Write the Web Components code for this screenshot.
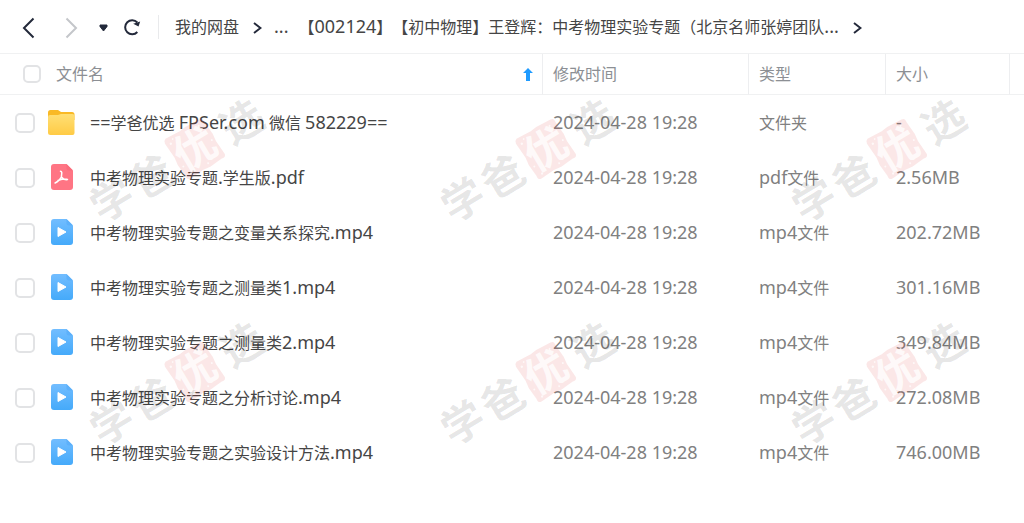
<!DOCTYPE html>
<html lang="zh-CN">
<head>
<meta charset="utf-8">
<title>我的网盘</title>
<style>
body {
    margin: 0;
    background: #fff;
    color: #454545;
    font: 16px/24px "Noto Sans", "Noto Sans CJK SC", sans-serif;
    text-spacing-trim: space-all;
}
</style>
</head>
<body>
<disk-page>
  <nav-bar slot="top">
    <path-crumbs>
      <path-crumb>我的网盘</path-crumb>
      <path-crumb plain>...</path-crumb>
      <path-crumb>【002124】【初中物理】王登辉：中考物理实验专题（北京名师张婷团队...</path-crumb>
    </path-crumbs>
  </nav-bar>
  <file-list></file-list>
</disk-page>

<script>
const files = [
  { kind: 'folder', name: '==学爸优选 FPSer.com 微信 582229==', type: '文件夹', size: '-' },
  { kind: 'pdf', name: '中考物理实验专题.学生版.pdf', type: 'pdf文件', size: '2.56MB' },
  { kind: 'video', name: '中考物理实验专题之变量关系探究.mp4', type: 'mp4文件', size: '202.72MB' },
  { kind: 'video', name: '中考物理实验专题之测量类1.mp4', type: 'mp4文件', size: '301.16MB' },
  { kind: 'video', name: '中考物理实验专题之测量类2.mp4', type: 'mp4文件', size: '349.84MB' },
  { kind: 'video', name: '中考物理实验专题之分析讨论.mp4', type: 'mp4文件', size: '272.08MB' },
  { kind: 'video', name: '中考物理实验专题之实验设计方法.mp4', type: 'mp4文件', size: '746.00MB' }
]
const modified = '2024-04-28 19:28'

// latin runs are set a little larger than the han characters
const latin = (text) => text.replace(/[\x21-\x7e]+( [\x21-\x7e]+)*/g, '<span class="latin">$&</span>')

class BaseElement extends HTMLElement {
  constructor() {
    super()
    this._shadowRoot = this.attachShadow({ mode: 'open' })
  }

  connectedCallback() {
    this._shadowRoot.innerHTML = this.render()
  }
}

class DiskPage extends BaseElement {
  render() {
    return `
<style>
:host {
    display: block;
    position: relative;
    min-height: 100vh;
    overflow: hidden;
}

.marks {
    position: absolute;
    inset: 0;
    padding: 97px 0 0 90px;
    display: grid;
    grid-template-columns: repeat(3, 180px);
    grid-auto-rows: 126px;
    gap: 97px 171px;
    align-content: start;
    pointer-events: none;
}
</style>
<slot name="top"></slot>
<slot></slot>
<div class="marks" aria-hidden="true">${'<water-mark></water-mark>'.repeat(6)}</div>`
  }
}

class WaterMark extends BaseElement {
  render() {
    return `
<style>
:host {
    display: block;
}

svg {
    display: block;
    overflow: visible;
}

text {
    font: 700 42px "Noto Sans CJK SC", sans-serif;
    text-anchor: middle;
    fill: #000;
    fill-opacity: 0.1;
}

.seal {
    fill: #d82020;
    fill-opacity: 0.11;
}

.seal-text {
    fill: #fff;
    fill-opacity: 0.8;
}
</style>
<svg width="180" height="126" viewBox="0 0 180 126">
  <text transform="translate(22 103) rotate(-31)" y="15">学</text>
  <text transform="translate(62 80) rotate(-31)" y="15">爸</text>
  <g transform="translate(105 52) rotate(-31)">
    <path class="seal" d="M-20-24L-4-23 3-24 19-23Q23-23 22-18L23-4 22 4 23 19Q23 23 18 22L4 23-4 22-19 23Q-23 23-22 18L-23 5-22-3-23-20Q-23-23-20-24Z"/>
    <text class="seal-text" y="15">优</text>
    <g fill="#fff" fill-opacity="0.7">
      <circle cx="-18" cy="-17" r="1.2"/><circle cx="-14" cy="-20" r="0.9"/><circle cx="-19" cy="9" r="1"/>
      <circle cx="-16" cy="19" r="1.1"/><circle cx="15" cy="-18" r="1"/><circle cx="19" cy="1" r="1"/><circle cx="4" cy="19" r="1"/>
    </g>
  </g>
  <text transform="translate(152 25) rotate(-31)" y="15">选</text>
</svg>`
  }
}

class NavBar extends BaseElement {
  render() {
    return `
<style>
:host {
    display: flex;
    align-items: center;
    height: 53px;
    padding-left: 16px;
    border-bottom: 1px solid #f0f1f2;
}

button {
    display: flex;
    align-items: center;
    justify-content: center;
    width: 24px;
    height: 24px;
    margin: 0;
    padding: 0;
    border: 0;
    background: none;
}

.history {
    display: flex;
    gap: 20px;
    margin-right: 8px;
}

.tools {
    display: flex;
    gap: 4px;
    margin-right: 14px;
}

.line {
    width: 1px;
    height: 24px;
    margin-right: 16px;
    background: #e9eaec;
}

svg {
    fill: none;
    stroke: #23293a;
    stroke-width: 2;
}
</style>
<div class="history">
  <button aria-label="后退"><svg width="24" height="24"><path d="M17.500 3.500L8 13l9.500 9.500"/></svg></button>
  <button aria-label="前进" disabled><svg width="24" height="24"><path d="M6.500 3.500L16 13l-9.500 9.500" stroke="#c4c6ca"/></svg></button>
</div>
<div class="tools">
  <button aria-label="历史"><svg width="24" height="24"><path d="M8 10h7v1.500L11.500 16 8 11.500z" fill="#23293a" stroke-width="1"/></svg></button>
  <button aria-label="刷新"><svg width="24" height="24"><path d="M17.300 7.500A7 7 0 1 0 17.300 17"/><path d="M20.200 6.500l-1.700 5-5.300-2.800z" fill="#23293a" stroke="none"/></svg></button>
</div>
<div class="line"></div>
<slot></slot>`
  }
}

class PathCrumbs extends BaseElement {
  render() {
    return `
<style>
:host {
    display: flex;
    align-items: center;
    min-width: 0;
    height: 24px;
}
</style>
<slot></slot>`
  }
}

class PathCrumb extends BaseElement {
  render() {
    return `
<style>
:host {
    display: flex;
    align-items: center;
    white-space: nowrap;
}

a {
    color: inherit;
    text-decoration: none;
}

svg {
    margin: 2px 12px 0 14px;
    fill: none;
    stroke: #23293a;
    stroke-width: 2;
}

:host([plain]) {
    margin-right: 10px;
}

:host([plain]) svg {
    display: none;
}

.latin {
    font-size: 18px;
    line-height: 24px;
}
</style>
<a href="#">${latin(this.textContent)}</a>
<svg width="9" height="12"><path d="M1 1l6.500 5L1 11"/></svg>`
  }
}

class CheckBox extends BaseElement {
  render() {
    return `
<style>
:host {
    display: block;
    width: 20px;
    height: 20px;
}

:host([small]) {
    width: 18px;
    height: 18px;
}

input {
    appearance: none;
    display: block;
    box-sizing: border-box;
    width: 100%;
    height: 100%;
    margin: 0;
    border: 2px solid #e2e3e5;
    border-radius: 5px;
    background: #fff;
}
</style>
<input type="checkbox" aria-label="${this.getAttribute('label')}">`
  }
}

class FileIcon extends BaseElement {
  render() {
    const sheet = 'M6 0h12.500l6.500 6.500V23q0 3-3 3H6q-3 0-3-3V3q0-3 3-3z'
    const icons = {
      folder: `
  <defs><linearGradient id="g" x2="0" y2="1"><stop stop-color="#ffdf75"/><stop offset="1" stop-color="#ffcb45"/></linearGradient></defs>
  <path d="M2.500 1H10l3 2h11q2.500 0 2.500 2.500V11H0V3.500Q0 1 2.500 1z" fill="#f9b926"/>
  <path d="M2 6h8l3-1h11.500q2 0 2 2v17q0 2-2 2H2.500Q0 26 0 23.500V8q0-2 2-2z" fill="url(#g)"/>`,
      pdf: `
  <path d="${sheet}" fill="#ff7584"/>
  <path d="M18.500 0L25 6.500h-4.500q-2 0-2-2z" fill="#fa6c7c"/>
  <path d="M12.500 7.200c2.200 0 .9 3.300.9 5.800 1.700 2.600 3.500 2.800 6.100 2.600M13.400 13c-1.800 3.200-3.600 5-6.300 6M10 16.500c2.500-1.400 6-2 9-1.200" fill="none" stroke="#fff" stroke-width="1.500" stroke-linecap="round"/>`,
      video: `
  <defs><linearGradient id="g" x2="0" y2="1"><stop stop-color="#72bdff"/><stop offset="1" stop-color="#45aafa"/></linearGradient></defs>
  <path d="${sheet}" fill="url(#g)"/>
  <path d="M18.500 0L25 6.500h-4.500q-2 0-2-2z" fill="#5db0fa"/>
  <path d="M10 8.500l8 4.500-8 4.500z" fill="#fff" stroke="#fff" stroke-linejoin="round"/>`
    }
    return `
<style>
:host {
    display: block;
}

svg {
    display: block;
}
</style>
<svg width="27" height="27" viewBox="0 0 27 27">${icons[this.getAttribute('kind')]}</svg>`
  }
}

class FileList extends BaseElement {
  render() {
    const rows = files.map((file) => `
  <tr>
    <td>
      <div class="name">
        <check-box label="${file.name}"></check-box>
        <file-icon kind="${file.kind}"></file-icon>
        <span>${latin(file.name)}</span>
      </div>
    </td>
    <td>${latin(modified)}</td>
    <td>${latin(file.type)}</td>
    <td>${latin(file.size)}</td>
    <td></td>
  </tr>`).join('')

    return `
<style>
:host {
    display: block;
}

table {
    width: 100%;
    table-layout: fixed;
    border-collapse: separate;
    border-spacing: 0;
}

th, td {
    box-sizing: border-box;
    padding: 0 0 0 11px;
    text-align: left;
    font-weight: 400;
    white-space: nowrap;
}

th {
    height: 41px;
    padding-left: 10px;
    border-bottom: 1px solid #f0f1f2;
    color: #8c8f94;
}

th + th {
    border-left: 1px solid #edeef0;
}

td {
    height: 55px;
    color: #808080;
}

th:first-child {
    padding: 0 9px 0 23px;
}

td:first-child {
    padding-left: 15px;
    color: #454545;
}

th:last-child, td:last-child {
    padding: 0;
}

.time {
    width: 206px;
}

.type {
    width: 137px;
}

.size {
    width: 124px;
}

.more {
    width: 15px;
}

.head {
    display: flex;
    align-items: center;
    gap: 15px;
}

.head svg {
    margin-left: auto;
}

.name {
    display: flex;
    align-items: center;
    gap: 13px;
}

.name file-icon + span {
    margin-left: 2px;
}

.latin {
    font-size: 18px;
    line-height: 24px;
}
</style>
<table>
  <thead>
  <tr>
    <th>
      <div class="head">
        <check-box small label="全选"></check-box>
        <span>文件名</span>
        <svg width="10" height="13"><path d="M5 0l5 5H7v8H3V5H0z" fill="#1f9bff"/></svg>
      </div>
    </th>
    <th class="time">修改时间</th>
    <th class="type">类型</th>
    <th class="size">大小</th>
    <th class="more"></th>
  </tr>
  </thead>
  <tbody>${rows}
  </tbody>
</table>`
  }
}

customElements.define('disk-page', DiskPage)
customElements.define('water-mark', WaterMark)
customElements.define('nav-bar', NavBar)
customElements.define('path-crumbs', PathCrumbs)
customElements.define('path-crumb', PathCrumb)
customElements.define('check-box', CheckBox)
customElements.define('file-icon', FileIcon)
customElements.define('file-list', FileList)
</script>
</body>
</html>
